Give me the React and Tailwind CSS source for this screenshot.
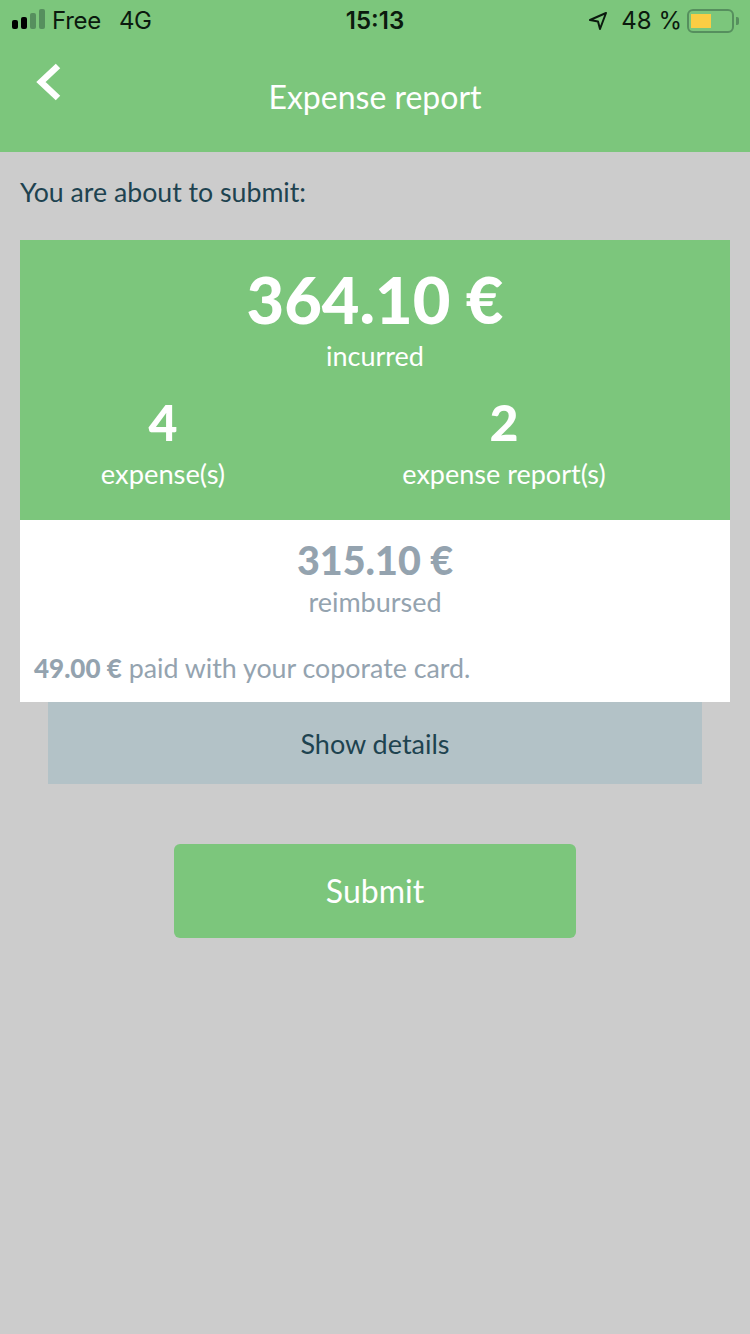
const sans = { fontFamily: '"Lato", "Noto Sans", sans-serif' };
const sys = { fontFamily: '"Inter", "Liberation Sans", sans-serif' };

function StatusBar() {
  return (
    <div className="relative flex h-[42px] items-center justify-between text-[24px] leading-none text-[#0b1a0e]" style={sys}>
      <div className="flex items-center pl-[12px]">
        <svg width="34" height="22" viewBox="0 0 34 22" className="mb-[2px]">
          <rect x="0" y="11" width="6" height="9" rx="2" fill="#000" />
          <rect x="9" y="8" width="6" height="12" rx="2" fill="#000" />
          <rect x="18" y="4" width="6" height="16" rx="2" fill="#568f5e" />
          <rect x="27" y="0" width="6" height="20" rx="2" fill="#568f5e" />
        </svg>
        <span className="ml-[6px] tracking-[-0.3px]">Free</span>
        <span className="ml-[18px] tracking-[-0.3px]">4G</span>
      </div>
      <span className="absolute left-0 right-0 text-center font-semibold">15:13</span>
      <div className="flex items-center pr-[16px]">
        <svg width="20" height="20" viewBox="0 0 20 20" fill="none" stroke="#0b1a0e" strokeWidth="2" strokeLinejoin="round" className="ml-[2px]">
          <path d="M18 2 L2 9 L10 10.5 L12 18 Z" />
        </svg>
        <span className="ml-[13px]">48 %</span>
        <div className="relative ml-[5px] flex h-[24px] w-[47px] items-center rounded-[6px] border-2 border-[#568f5e] p-[2px]">
          <div className="h-[14px] w-[20px] bg-[#fbcd44]" />
          <div className="absolute right-[-7px] h-[8px] w-[3px] rounded-r-[2px] bg-[#568f5e]" />
        </div>
      </div>
    </div>
  );
}

export default function App() {
  return (
    <div className="flex min-h-[1334px] flex-col bg-[#cccccc]" style={sans}>
      <header className="h-[152px] bg-[#7cc67c]">
        <StatusBar />
        <div className="relative flex h-[110px] justify-center">
          <svg width="26" height="38" viewBox="0 0 26 38" className="absolute left-[35px] top-[21px]" fill="none" stroke="#fff" strokeWidth="6.5">
            <path d="M23 3 L6 19 L23 35" />
          </svg>
          <span className="pt-[35px] text-[32px] leading-[40px] text-white">Expense report</span>
        </div>
      </header>

      <p className="px-[20px] pt-[23px] text-[26.7px] leading-[34px] text-[#1e4350]">You are about to submit:</p>

      <section className="mx-[20px] mt-[31px] flex h-[280px] flex-col items-center bg-[#7cc67c] pt-[21px] text-white">
        <div className="text-[65px] font-black leading-[76px]">364.10 €</div>
        <div className="mt-[3px] text-[27px] leading-[32px]">incurred</div>
        <div className="mt-[25px] grid w-full grid-cols-[286px_396px] text-center">
          <div>
            <div className="text-[50px] font-black leading-[50px]">4</div>
            <div className="mt-[7px] text-[27.3px] leading-[40px]">expense(s)</div>
          </div>
          <div>
            <div className="text-[50px] font-black leading-[50px]">2</div>
            <div className="mt-[7px] text-[27px] leading-[40px]">expense report(s)</div>
          </div>
        </div>
      </section>

      <section className="mx-[20px] flex h-[182px] flex-col bg-white text-[#94a3af]">
        <div className="mt-[15px] text-center text-[39.5px] font-black leading-[50px]">315.10 €</div>
        <div className="mt-[-1px] text-center text-[27px] leading-[36px]">reimbursed</div>
        <div className="mt-[30px] pl-[14px] text-[26.8px] leading-[36px]">
          <span className="text-[26px] font-black">49.00 €</span> paid with your coporate card.
        </div>
      </section>

      <button className="mx-[48px] h-[82px] bg-[#b3c2c7] pt-[2px] text-[27px] text-[#1e4350]">Show details</button>

      <button className="mx-auto mt-[60px] h-[94px] w-[402px] rounded-[6px] bg-[#7cc67c] text-[32px] text-white">Submit</button>
    </div>
  );
}
